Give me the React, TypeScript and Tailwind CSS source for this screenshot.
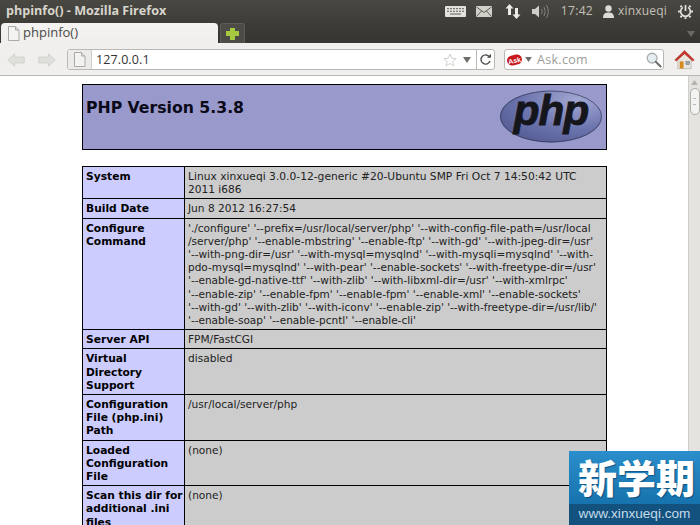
import React from "react";

function Row({ label, children }: { label: React.ReactNode; children: React.ReactNode }) {
  return (
    <tr>
      <td className="border border-black bg-[#ccccff] px-[3px] pt-[3px] pb-[2px] align-top font-bold leading-[13.2px] text-[10.7px] text-black whitespace-nowrap">{label}</td>
      <td className="border border-black bg-[#cccccc] px-[3px] pt-[3px] pb-[2px] align-top leading-[13.2px] text-[10.6px] text-[#222]">{children}</td>
    </tr>
  );
}

function Keyboard() {
  return (
    <svg width="21" height="11" viewBox="0 0 21 11">
      <rect x="0" y="0" width="21" height="11" rx="1" fill="#e4e2dc" />
      <g fill="#77756f">
        <rect x="2" y="2" width="2" height="1.2" /><rect x="5" y="2" width="2" height="1.2" /><rect x="8" y="2" width="2" height="1.2" /><rect x="11" y="2" width="2" height="1.2" /><rect x="14" y="2" width="2" height="1.2" /><rect x="17" y="2" width="2" height="1.2" />
        <rect x="2" y="4.7" width="2" height="1.2" /><rect x="5" y="4.7" width="2" height="1.2" /><rect x="8" y="4.7" width="2" height="1.2" /><rect x="11" y="4.7" width="2" height="1.2" /><rect x="14" y="4.7" width="2" height="1.2" /><rect x="17" y="4.7" width="2" height="1.2" />
        <rect x="5" y="7.4" width="11" height="1.2" />
      </g>
    </svg>
  );
}

function Mail() {
  return (
    <svg width="16" height="11" viewBox="0 0 16 11">
      <rect x="0" y="0" width="16" height="11" fill="#d2d0ca" />
      <path d="M0.5 1 L8 6.5 L15.5 1 M0.5 10.5 L5.5 5 M15.5 10.5 L10.5 5" stroke="#5a5852" strokeWidth="1" fill="none" />
    </svg>
  );
}

function NetArrows() {
  return (
    <svg width="16" height="15" viewBox="0 0 16 15">
      <path d="M4.5 0 L8.5 4.5 H6 V11 H3 V4.5 H0.5 Z" fill="#ecebe6" />
      <path d="M11.5 15 L7.5 10.5 H10 V4 H13 V10.5 H15.5 Z" fill="#ecebe6" />
    </svg>
  );
}

function Volume() {
  return (
    <svg width="18" height="15" viewBox="0 0 18 15">
      <path d="M0 5 H3 L7 1.5 V13.5 L3 10 H0 Z" fill="#d0cec8" />
      <path d="M9.5 5 Q11 7.5 9.5 10 M12 3 Q14.5 7.5 12 12 M14.5 1 Q18 7.5 14.5 14" stroke="#85837d" strokeWidth="1" fill="none" />
    </svg>
  );
}

function User() {
  return (
    <svg width="11" height="13" viewBox="0 0 11 13">
      <circle cx="5.5" cy="3.5" r="3.2" fill="#dedcd7" />
      <path d="M0 13 C0 8.5 2.5 7.5 5.5 7.5 C8.5 7.5 11 8.5 11 13 Z" fill="#dedcd7" />
    </svg>
  );
}

function Gear() {
  return (
    <svg width="15" height="15" viewBox="0 0 16 16">
      <path d="M5.2 3.6 A5.2 5.2 0 1 0 10.8 3.6" fill="none" stroke="#e2e0db" strokeWidth="1.8" />
      <path d="M8 1 V7.5" stroke="#e2e0db" strokeWidth="1.8" />
      <path d="M2.6 1.8 L4 3.2 M13.4 1.8 L12 3.2 M0 8 H2 M16 8 H14 M2.6 14.2 L4 12.8 M13.4 14.2 L12 12.8 M8 16 V14" stroke="#e2e0db" strokeWidth="2.2" />
    </svg>
  );
}

function PageIcon() {
  return (
    <svg width="13" height="15" viewBox="0 0 13 15">
      <path d="M1.5 0.5 H8.5 L12 4 V14.5 H1.5 Z" fill="#f3f3f1" stroke="#aaa9a4" />
      <path d="M8.5 0.5 V4 H12" fill="#dcdcd9" stroke="#aaa9a4" />
    </svg>
  );
}

function Arrow({ flip }: { flip?: boolean }) {
  return (
    <svg width="18" height="14" viewBox="0 0 18 14" style={flip ? { transform: "scaleX(-1)" } : undefined}>
      <path d="M0.8 7 L7.5 0.8 V4 H17.2 V10 H7.5 V13.2 Z" fill="#dfdfdb" stroke="#d2d2ce" strokeWidth="1" strokeLinejoin="round" />
    </svg>
  );
}

function Home() {
  return (
    <svg width="21" height="21" viewBox="0 0 22 22">
      <path d="M4 10 V20.5 H18 V10 L11 4 Z" fill="#e8e6df" stroke="#a8a49a" strokeWidth="0.6" />
      <rect x="6" y="13" width="4" height="7.5" fill="#d58a1f" />
      <rect x="12.5" y="13" width="3.6" height="3.4" fill="#9aa6ad" stroke="#6f6f6b" strokeWidth="0.5" />
      <path d="M0.8 11.5 L11 1.5 L21.2 11.5 L19.5 12.6 L11 5 L2.5 12.6 Z" fill="#c9342a" stroke="#a02520" strokeWidth="0.5" strokeLinejoin="round" />
    </svg>
  );
}

function Magnifier() {
  return (
    <svg width="16" height="16" viewBox="0 0 17 17">
      <circle cx="6.5" cy="6.5" r="5.2" fill="#e3edf2" stroke="#a9acac" strokeWidth="1.4" />
      <path d="M10.5 10.5 L15.5 15.5" stroke="#6e6e6b" strokeWidth="2.2" strokeLinecap="round" />
    </svg>
  );
}

function PhpLogo() {
  return (
    <svg width="104" height="53" viewBox="0 0 106 54" className="block">
      <defs>
        <radialGradient id="ph" cx="0.75" cy="0.2" r="0.9">
          <stop offset="0" stopColor="#a3a9d2" />
          <stop offset="0.6" stopColor="#6c74ae" />
          <stop offset="1" stopColor="#565d95" />
        </radialGradient>
      </defs>
      <ellipse cx="53" cy="27" rx="52" ry="26.5" fill="url(#ph)" />
      <ellipse cx="53" cy="27" rx="51.5" ry="26" fill="none" stroke="#30344f" strokeWidth="0.7" />
      <text x="53" y="36" textAnchor="middle" fontFamily="'Liberation Sans', sans-serif" fontWeight="700" fontStyle="italic" fontSize="43" fill="#15151c" stroke="#15151c" strokeWidth="0.9" letterSpacing="-1">php</text>
    </svg>
  );
}

const configure = [
  "'./configure' '--prefix=/usr/local/server/php' '--with-config-file-path=/usr/local",
  "/server/php' '--enable-mbstring' '--enable-ftp' '--with-gd' '--with-jpeg-dir=/usr'",
  "'--with-png-dir=/usr' '--with-mysql=mysqlnd' '--with-mysqli=mysqlnd' '--with-",
  "pdo-mysql=mysqlnd' '--with-pear' '--enable-sockets' '--with-freetype-dir=/usr'",
  "'--enable-gd-native-ttf' '--with-zlib' '--with-libxml-dir=/usr' '--with-xmlrpc'",
  "'--enable-zip' '--enable-fpm' '--enable-fpm' '--enable-xml' '--enable-sockets'",
  "'--with-gd' '--with-zlib' '--with-iconv' '--enable-zip' '--with-freetype-dir=/usr/lib/'",
  "'--enable-soap' '--enable-pcntl' '--enable-cli'",
];

export default function App() {
  return (
    <div className="relative w-[700px] h-[525px] overflow-hidden flex flex-col bg-white font-['Noto_Sans',sans-serif]">
      {/* Title bar */}
      <div className="h-[22px] shrink-0 flex items-center bg-gradient-to-b from-[#4a4843] to-[#3f3d38] pl-[6px]">
        <span className="text-[12.6px] font-bold text-[#d8d5cd] font-['Open_Sans',sans-serif] leading-none">phpinfo() - Mozilla Firefox</span>
        <div className="ml-auto flex items-center">
          <div className="mr-[10px]"><Keyboard /></div>
          <div className="mr-[13px]"><Mail /></div>
          <div className="mr-[11px] mt-[1px]"><NetArrows /></div>
          <div className="mr-[11px]"><Volume /></div>
          <span className="text-[12px] text-[#c4c1b9] mr-[10px] font-['Open_Sans',sans-serif] tracking-[0.3px]">17:42</span>
          <div className="mr-[4px]"><User /></div>
          <span className="text-[12px] text-[#c4c1b9] mr-[11px] font-['Open_Sans',sans-serif] tracking-[0.2px]">xinxueqi</span>
          <div className="mr-[7px]"><Gear /></div>
        </div>
      </div>
      {/* Tab strip */}
      <div className="relative h-[21px] shrink-0 flex items-end bg-gradient-to-b from-[#3f3d38] to-[#363430] pl-[1px]">
        <div className="h-[20px] w-[217px] rounded-t-[4px] bg-gradient-to-b from-[#f4f3f1] to-[#f0efed] flex items-center pl-[6px] gap-[3px]">
          <PageIcon />
          <span className="text-[13px] text-[#4a4a4a] font-['Open_Sans',sans-serif]">phpinfo()</span>
        </div>
        <div className="ml-[2px] h-[20px] w-[25px] rounded-t-[3px] bg-[#4d4b45] border border-b-0 border-[#5e5c56] flex items-center justify-center">
          <div className="relative w-[13px] h-[12px]">
            <div className="absolute left-[4px] top-0 w-[5px] h-[12px] bg-[#a5c93f]" />
            <div className="absolute left-0 top-[3.5px] w-[13px] h-[5px] bg-[#a5c93f]" />
          </div>
        </div>
        <svg className="absolute right-[5px] top-[9px]" width="8" height="6" viewBox="0 0 8 6"><path d="M0 0 H8 L4 6 Z" fill="#6b6963" /></svg>
      </div>
      {/* Nav bar */}
      <div className="h-[33px] shrink-0 flex items-center bg-[#f0efed] border-b border-[#b9b8b5] pl-[7px] pt-[1px]">
        <Arrow />
        <div className="ml-[13px]"><Arrow flip /></div>
        <div className="ml-[11px] w-[428px] h-[21px] rounded-[3px] border border-[#b8b8b4] bg-white flex items-center overflow-hidden">
          <div className="w-[24px] h-full bg-[#ecebe9] border-r border-[#cfcecb] flex items-center justify-center shrink-0"><PageIcon /></div>
          <span className="ml-[4px] mt-[1px] text-[12.5px] text-[#333] font-['Open_Sans',sans-serif] tracking-[0.1px]">127.0.0.1</span>
          <svg className="ml-auto mr-[6px]" width="14" height="14" viewBox="0 0 24 24"><path d="M12 2 L15 9 L22.5 9.6 L16.8 14.5 L18.5 22 L12 18 L5.5 22 L7.2 14.5 L1.5 9.6 L9 9 Z" fill="#fff" stroke="#c9c9c6" strokeWidth="1.5" /></svg>
          <svg className="mr-[5px]" width="8" height="6" viewBox="0 0 8 6"><path d="M0 0 H8 L4 6 Z" fill="#6d6d6a" /></svg>
          <div className="w-[18px] h-full border-l border-[#b8b8b4] flex items-center justify-center shrink-0">
            <svg width="13" height="13" viewBox="0 0 13 13"><path d="M10.5 4 A4.6 4.6 0 1 0 11 8" fill="none" stroke="#4f4f4c" strokeWidth="1.4" /><path d="M8 4.7 H12 V0.8 Z" fill="#4f4f4c" /></svg>
          </div>
        </div>
        <div className="ml-[9px] w-[160px] h-[21px] rounded-[3px] border border-[#b8b8b4] bg-white flex items-center pl-[2px]">
          <div className="w-[15px] h-[10px] rounded-[5px] bg-[#c8171d] -rotate-12 flex items-center justify-center text-[7px] font-bold text-white font-['Liberation_Sans',sans-serif] leading-none">Ask</div>
          <svg className="ml-[3px]" width="7" height="5" viewBox="0 0 8 6"><path d="M0 0 H8 L4 6 Z" fill="#6d6d6a" /></svg>
          <span className="ml-[5px] mt-[1px] text-[12.5px] text-[#9c9c99] font-['Open_Sans',sans-serif] tracking-[0.3px]">Ask.com</span>
          <div className="ml-auto mr-[1px]"><Magnifier /></div>
        </div>
        <div className="ml-[10px]"><Home /></div>
      </div>
      {/* Content */}
      <div className="relative flex-1 flex overflow-hidden">
        <div className="flex-1 overflow-hidden pt-[8px] pl-[82px] font-['DejaVu_Sans',sans-serif]">
          <div className="w-[525px] h-[66px] border border-black bg-[#9999cc] flex justify-between px-[3px] pt-[5px]">
            <h1 className="text-[15.7px] font-bold leading-[20px] h-[20px] mt-[8px] text-[#0a0a18]">PHP Version 5.3.8</h1>
            <PhpLogo />
          </div>
          <table className="mt-[16px] w-[525px] border-collapse table-fixed">
            <colgroup><col className="w-[102px]" /><col /></colgroup>
            <tbody>
              <Row label="System"><span className="text-[10.7px]">Linux xinxueqi 3.0.0-12-generic #20-Ubuntu SMP Fri Oct 7 14:50:42 UTC</span><br />2011 i686</Row>
              <Row label="Build Date">Jun 8 2012 16:27:54</Row>
              <Row label={<>Configure<br />Command</>}>
                <div className="whitespace-nowrap text-[10.52px]">{configure.map((l) => <div key={l}>{l}</div>)}</div>
              </Row>
              <Row label="Server API">FPM/FastCGI</Row>
              <Row label={<>Virtual<br />Directory<br />Support</>}>disabled</Row>
              <Row label={<>Configuration<br />File (php.ini)<br />Path</>}>/usr/local/server/php</Row>
              <Row label={<>Loaded<br />Configuration<br />File</>}>(none)</Row>
              <Row label={<>Scan this dir for<br />additional .ini<br />files</>}>(none)</Row>
            </tbody>
          </table>
        </div>
        {/* Scrollbar */}
        <div className="w-[12px] shrink-0 bg-[#e4e3e0] border-l border-[#cfcec9] flex flex-col items-center">
          <svg className="mt-[4px]" width="7" height="5" viewBox="0 0 8 6"><path d="M4 0 L8 6 H0 Z" fill="#b3b2ae" /></svg>
          <div className="mt-[3px] w-[10px] h-[27px] rounded-[5px] bg-[#f3f3f1] border border-[#aeada8] flex items-center justify-center">
            <div className="w-[3px] h-[7px] border-y border-[#b9b8b4]" />
          </div>
        </div>
      </div>
      {/* Watermark */}
      <div className="absolute right-0 bottom-0 w-[131px] h-[74px] flex flex-col overflow-hidden">
        <div className="flex-1 bg-gradient-to-b from-[#2a8ecb] to-[#1673ad] flex items-center pl-[9px]">
          <span className="text-[39px] leading-[44px] font-black text-white font-['Noto_Sans_CJK_SC',sans-serif] -mt-[3px] whitespace-nowrap [text-shadow:1px_1px_1px_rgba(0,40,80,0.5)]">新学期</span>
        </div>
        <div className="h-[21px] bg-[#13527f] flex items-center justify-center">
          <span className="text-[13.6px] text-[#c5dbe9] font-['Liberation_Sans',sans-serif] whitespace-nowrap">www.xinxueqi.com</span>
        </div>
      </div>
    </div>
  );
}
